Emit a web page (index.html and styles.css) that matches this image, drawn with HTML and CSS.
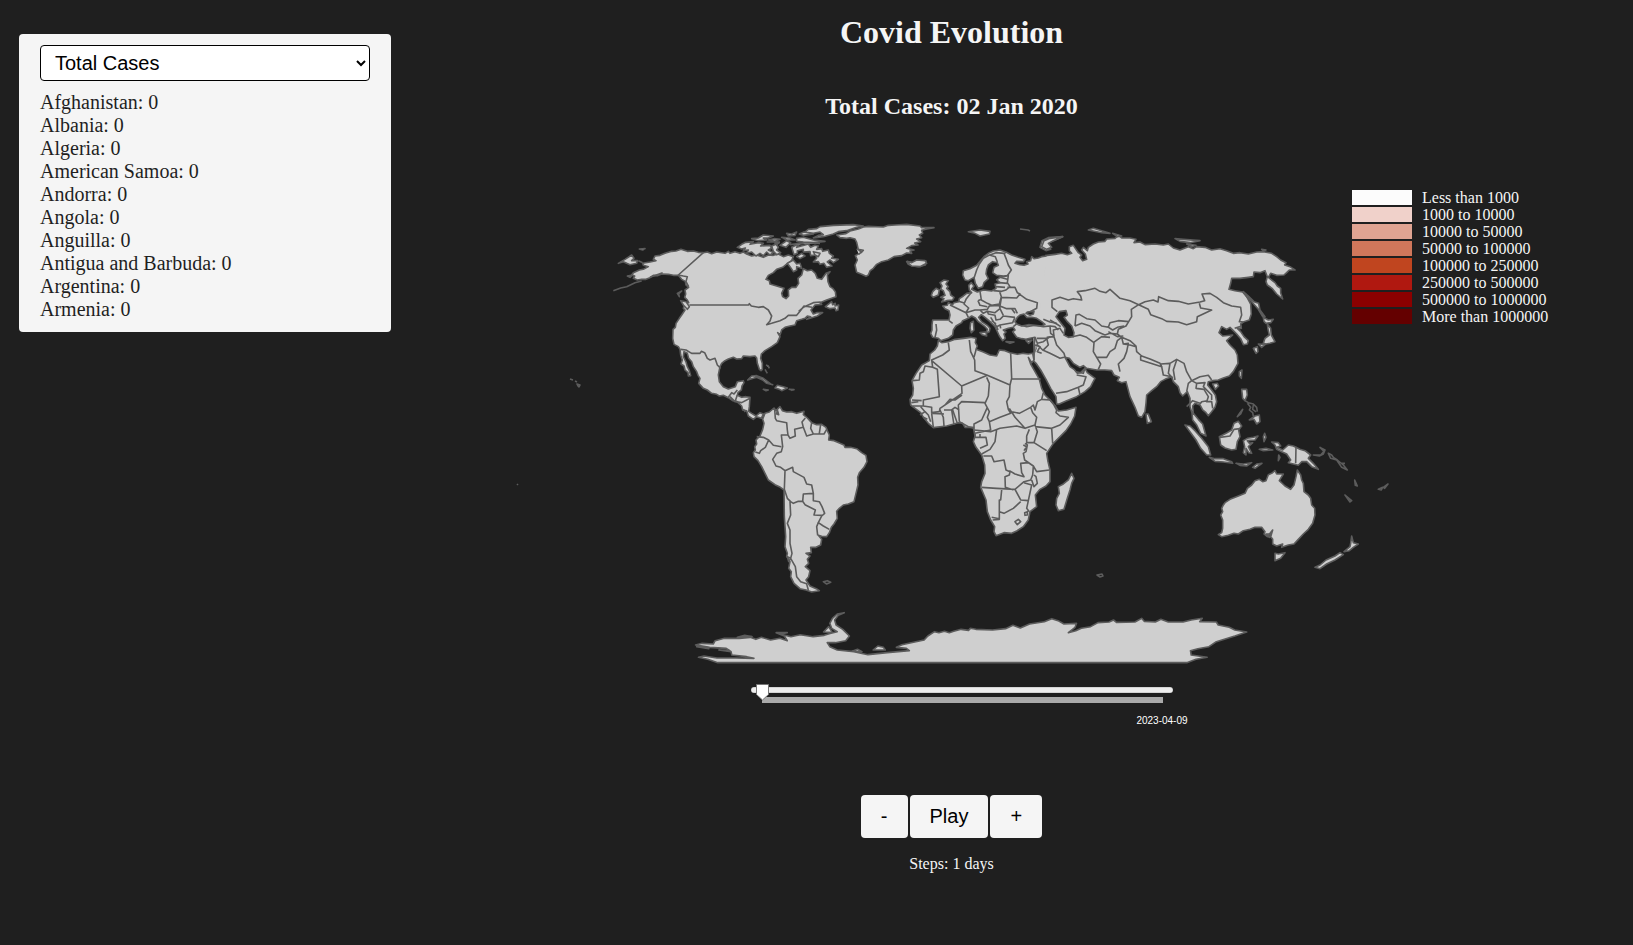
FILE: index.html
```html
<!DOCTYPE html>
<html lang="en">
<head>
<meta charset="utf-8">
<title>Covid Evolution</title>
<link rel="stylesheet" href="styles.css">
</head>
<body>
<aside class="side">
  <div class="panel">
    <select class="metric"><option>Total Cases</option><option>Total Deaths</option></select>
    <ul class="countries">
      <li>Afghanistan: 0</li><li>Albania: 0</li><li>Algeria: 0</li><li>American Samoa: 0</li><li>Andorra: 0</li><li>Angola: 0</li><li>Anguilla: 0</li><li>Antigua and Barbuda: 0</li><li>Argentina: 0</li><li>Armenia: 0</li>
    </ul>
  </div>
</aside>
<main class="main">
  <h1 class="title">Covid Evolution</h1>
  <h2 class="subtitle">Total Cases: 02 Jan 2020</h2>
  <svg class="map" viewBox="391 140 1121 535" width="1121" height="535">
    <!-- North America -->
    <g transform="translate(600 210) scale(.33333)">
      <path class="land" d="M310,128L295,127 280,123 262,124 250,120 243,118 228,123 215,124 195,130 180,136 165,138 160,148 168,152 150,156 128,160 130,166 145,170 130,178 118,180 100,188 95,195 104,198 100,205 112,210 125,208 138,208 150,203 160,196 172,197 185,192 205,193 220,196 235,196 245,208 256,214 258,225 266,232 255,240 257,252 254,262 262,270 266,278 255,280 250,295 255,300 245,315 238,325 228,340 226,352 219,358 218,385 222,403 235,410 240,418 242,435 247,450 243,462 252,468 255,480 264,488 265,498 272,497 268,482 262,470 258,456 250,440 252,425 262,430 266,445 275,455 280,470 290,485 294,496 300,505 296,520 310,535 322,540 335,550 350,553 358,558 370,556 385,563 398,572 410,574 425,588 428,600 440,602 445,618 460,628 470,620 484,625 490,612 480,608 468,618 455,610 446,604 448,590 450,562 438,560 425,562 412,556 414,548 424,540 426,528 432,518 430,512 412,515 406,530 385,537 370,530 358,515 355,495 360,470 365,460 375,452 385,447 400,442 410,447 425,446 430,438 450,440 465,438 470,444 472,460 478,478 483,482 487,478 487,460 482,445 484,432 495,422 515,410 532,398 540,380 533,368 540,375 545,360 555,352 570,348 585,345 590,332 605,328 615,325 622,318 632,320 620,328 640,322 652,318 668,308 650,308 640,312 633,300 645,285 665,283 660,278 680,270 708,260 706,245 698,235 690,230 684,215 682,195 690,185 678,190 665,208 652,205 646,190 635,180 622,182 610,176 605,195 594,205 596,220 588,232 575,232 565,240 566,258 558,266 548,260 545,250 552,235 530,228 510,222 508,212 498,208 505,196 520,188 530,178 548,172 560,162 575,152 580,140 565,135 550,140 535,132 520,136 505,135 490,142 470,135 455,138 440,132 430,126 420,130 405,125 390,130 385,124 375,130 350,126 335,131 322,126Z"/>
      <path class="line" d="M125,213L105,218 80,230 62,234 40,242M150,202L188,188M128,158L115,152M310,128L235,195 250,198 262,200 258,215 266,230M268,285H446L448,281 454,288 475,292 490,290 505,300 515,318 510,333 500,344 515,340 540,332 555,325 565,316 590,316 600,304 612,288 636,292M596,304L610,292 640,278 662,276M242,418L258,420 275,430 300,430 304,424 314,428 322,445 330,450 345,445 352,465 362,475M385,562L395,548 402,552 412,540M390,560L405,575 412,555M405,575L425,578 450,565M430,598L436,606"/>
      <path class="land" d="M55,160L75,148 95,135 102,145 95,152 112,152 110,160 90,164 80,160 70,155ZM118,117L135,116 128,120ZM82,198L98,195 90,202ZM232,250L245,243 236,252 238,260ZM242,272L258,275 268,290 262,298 250,285ZM676,290L695,275 698,284 706,280 705,288 716,285 714,300 708,302 705,294 690,296ZM443,510L455,498 470,497 490,505 512,522 518,524 500,520 488,510 470,502ZM525,534L532,526 550,530 562,534 545,542 538,538ZM490,538L505,540 498,542ZM568,538L582,539 575,541ZM498,465L505,468 508,475M495,478L502,490"/>
      <path class="land" d="M412,112L425,103 437,97 460,95 450,103 475,98 490,100 482,108 510,106 515,115 505,120 520,128 510,135 500,126 490,137 480,130 468,138 455,126 440,130 445,120 430,122 436,114 425,117ZM515,108L528,103 535,112 530,120 542,128 530,134 520,124ZM575,112L600,100 590,112 612,106 625,102 632,112 645,106 655,108 650,118 665,116 668,124 685,120 688,130 700,138 695,145 715,148 700,158 690,150 682,156 696,168 680,172 672,160 660,163 655,155 640,156 650,145 648,135 632,137 630,125 610,126 610,118 592,122 592,130 582,134ZM590,140L605,130 615,138 600,146ZM562,160L580,150 590,162 600,160 605,175 590,170 590,180 580,185 570,170Z"/>
      <path class="land" d="M455,86L475,84 490,75 520,78 505,84 490,84 500,90 475,92ZM505,90L522,86 540,88 525,94ZM540,106L560,92 572,98 558,112ZM525,100L538,98 530,104ZM560,70L575,72 590,66 585,76 565,78ZM545,82L570,84 585,90 560,90ZM598,72L612,66 630,70 640,72 610,76ZM615,66L625,58 650,56 660,50 700,46 760,44 790,48 770,52 740,62 715,65 700,72 670,80 640,84 655,76 670,74 660,66 640,70ZM590,85L610,82 640,90 675,94 640,98 610,96 590,94ZM500,96L540,96M570,104L620,98 660,100M640,125L660,130 655,140 645,135Z"/>
    </g>
    <!-- Greenland, Iceland -->
    <g transform="translate(740 215) scale(.33333)">
      <path class="land" d="M290,60L318,56 330,48 355,42 370,36 385,34 430,36 445,31 465,30 500,28 540,33 545,38 582,38 560,42 545,46 548,55 538,60 545,68 530,72 542,80 524,84 534,90 515,92 500,100 522,105 510,108 515,115 500,114 485,122 462,125 445,135 425,140 410,148 400,160 390,168 385,180 378,184 365,178 350,172 345,150 352,135 346,122 365,112 355,104 350,82 345,72 330,68 320,70 300,68ZM350,102L370,106 356,118M500,140L515,142 508,148 518,146 530,137 545,140 558,138 556,150 535,155 515,152 505,148Z"/>
    </g>
    <!-- South America -->
    <g transform="translate(730 390) scale(.33333)">
      <path class="land" d="M98,88L105,70 118,66 132,54 138,62 150,50 157,62 170,66 185,65 200,70 222,64 220,74 232,84 245,98 260,104 275,103 288,112 292,122 298,135 296,150 312,152 330,160 342,165 345,172 362,172 380,176 395,188 408,196 411,215 402,232 388,248 383,262 384,285 378,310 372,335 355,342 340,345 328,355 320,364 322,385 312,402 304,412 298,428 290,440 275,439 265,436 275,448 272,465 258,472 242,472 244,488 228,490 240,498 232,508 236,520 226,530 240,542 236,560 228,570 240,588 262,598 268,602 245,606 228,600 210,596 192,580 182,560 184,545 176,535 180,515 170,500 172,490 165,470 167,440 163,380 162,300 148,290 135,284 115,270 105,250 95,230 84,212 72,200 70,188 76,180 74,170 80,162 78,150 90,138 98,118 102,100Z"/>
      <path class="line" d="M134,58L136,85 140,92 170,98 172,120 174,135 154,135 158,170 154,185 140,190 128,208 138,228 152,232 165,242 188,232 190,245 222,262 230,282 245,285 250,310 250,332 268,335 276,350 284,370 275,378 265,398 280,408 298,418M80,140L100,142 116,150 106,172 92,182 88,190 76,186M116,150L130,166 154,170M174,135L180,145 196,138 194,118 220,112 216,96 226,84M220,112L230,138 250,132 242,115 245,98M250,132L282,132 290,118M268,130L272,103M165,242L163,298 172,325 182,335 190,340 205,334 218,334 220,312 250,310M218,334L225,344 256,360 252,375 276,376M180,335L182,375 172,400 180,420 180,460 186,490 182,505 196,530 200,560 212,575 232,582M265,398L260,410 263,436M230,582L235,600M142,60L146,74 140,72ZM172,500L182,505 176,515ZM280,575L292,572 302,577 290,582Z"/>
    </g>
    <!-- Asia -->
    <g transform="translate(1030 220) scale(.33333)">
      <path class="land-fill" d="M35,114L60,110 50,380 12,400 10,355Z"/>
      <path class="land" d="M45,107L75,103 95,100 112,104 125,100 118,92 118,80 130,76 138,88 145,98 155,105 150,112 158,122 170,118 166,102 155,90 160,82 172,92 175,82 190,72 205,66 225,64 230,57 255,55 265,46 275,54 300,54 318,58 312,68 330,66 345,74 375,72 400,75 415,72 430,84 450,90 475,80 490,86 500,80 525,82 545,90 570,86 590,92 610,100 630,98 655,102 680,96 700,95 725,100 740,110 752,120 768,128 764,135 780,140 795,150 778,150 770,158 762,165 740,166 722,160 715,172 735,188 742,198 752,205 752,218 758,237 740,222 726,205 712,195 708,185 712,170 705,152 690,158 672,156 670,170 655,172 630,175 605,175 602,190 597,208 615,212 638,216 650,230 662,252 664,282 658,300 642,305 632,312 634,325 622,325 632,335 642,350 655,362 652,372 640,374 632,356 620,342 610,332 600,322 590,328 575,320 567,338 578,348 608,345 590,362 600,375 615,390 622,405 624,430 610,455 598,468 580,474 565,480 548,482 535,485 533,495 545,510 556,525 560,545 555,562 545,575 535,587 528,578 518,570 510,555 495,550 488,558 490,580 505,598 518,612 528,648 512,640 500,615 488,600 486,578 480,560 480,535 472,515 458,528 450,518 445,500 430,485 425,470 405,478 392,485 380,500 365,512 350,525 348,550 345,575 335,592 325,588 315,562 300,530 292,500 288,485 275,488 262,482 268,472 252,465 245,452 225,450 200,450 170,445 160,437 150,442 130,430 118,415 105,412 120,440 132,448 142,460 152,458 165,445 172,458 195,475 188,488 182,500 165,515 140,530 110,542 88,552 80,552 78,530 62,505 48,478 32,450 18,430 8,420 12,400 18,385 14,370 18,350"/>
      <path class="sea" d="M78,290L88,275 108,272 112,285 102,292 112,305 125,318 132,338 130,350 115,352 102,345 105,325 95,312Z"/>
      <path class="line" d="M82,275L66,262 66,240 90,232 115,240 130,236 155,240 152,228 142,215 165,212 195,205 210,214 228,218 240,208 270,235 300,242 326,254 345,245 370,240 384,246 386,230 415,242 445,244 475,252 510,246 524,242 516,222 540,220 560,232 580,248 605,258 632,262 635,285 628,305 640,306M326,254L355,268 362,284 395,296 410,304 445,306 470,314 500,305 502,290 545,270 512,264 508,250M326,254L304,268 305,290 296,305 288,318 265,328 262,342 275,352 300,362 318,378 320,395 335,408 362,418 390,430 395,440 332,420 332,408M392,432L420,430 440,418 462,430 470,455 485,482 510,470 535,466 545,480M395,440L400,465 425,470M420,430L415,460 428,475M440,420L430,450 435,480M485,482L475,490 470,515M485,482L500,490 498,505 522,508 535,530 530,545 545,545 548,565M500,490L525,488 520,500 545,525 545,540M510,552L515,545 532,542M135,318L138,285 148,283 170,296 195,300 215,318 235,322 240,308 265,302 296,305M135,318L155,310 180,318 195,332 225,345 240,340 262,342M232,320L248,330 262,322 282,318M235,335L262,350 280,348M128,350L150,345 170,352 192,368 190,395 200,412 230,412 240,395 255,385 262,362 275,352M190,368L215,350 240,352M200,412L212,432 205,448M275,352L280,372 295,370 290,395 282,415 265,432 270,455M280,372L300,375 318,380M72,350L80,375 102,400 106,414M102,412L90,415 60,400 38,390 20,372M38,392L55,375 50,355 20,355M50,352L72,350 70,330 90,325 100,340M60,300L80,312 92,320M78,520L110,515 145,502 160,495 168,470 140,465M145,502L150,525M614,325L635,318M138,455L160,460 165,445"/>
      <path class="land" d="M175,30L190,25 215,32 240,40 215,38ZM248,40L275,48 262,50ZM435,56L460,58 510,62 480,68 450,64ZM470,72L498,76 485,80ZM695,88L708,90 700,92ZM30,82L36,62 55,53 98,50 70,62 50,72 62,88 48,92ZM640,215L655,228 672,245 686,250 690,270 705,290 698,290 685,268 665,245 650,230ZM700,292L715,300 730,298 722,308 708,310 702,304ZM712,312L722,325 724,345 735,365 720,370 708,372 700,370 705,355 718,345 714,328ZM670,385L682,380 684,395 678,400ZM685,372L705,374 695,382ZM628,455L636,450 634,475 628,468ZM548,492L562,490 566,498 556,508ZM348,582L355,582 364,605 352,610 350,598Z"/>
    </g>
    <!-- Europe and western Russia -->
    <g transform="translate(900 230) scale(.33333)">
      <path class="land" d="M440,78L425,80 415,84 402,86 395,80 392,92 380,95 384,102 372,106 360,104 345,100 350,94 370,95 375,88 355,82 335,75 318,66 300,60 280,63 265,70 252,80 240,94 230,106 210,116 190,122 188,135 195,150 205,152 222,142 226,160 235,175 248,170 252,158 265,146 258,132 260,118 265,105 278,95 292,98 295,106 282,112 278,128 290,136 310,138 325,137 300,142 290,150 300,158 285,162 288,175 275,183 250,180 232,186 215,178 222,168 214,158 206,166 208,180 215,188 200,190 190,198 178,206 176,215 162,218 158,224 145,218 142,226 128,228 135,236 147,242 150,255 147,270 120,270 98,270 96,285 96,300 92,310 98,322 115,325 122,332 145,325 158,315 160,300 168,288 185,278 188,272 205,265 215,258 226,264 235,275 255,290 262,298 258,310 268,305 270,295 262,286 245,275 236,262 244,254 255,262 270,275 285,290 292,305 298,318 308,332 316,325 312,312 318,306 310,300 325,295 340,292 345,300 338,305 350,322 365,326 378,328 390,325 405,322 403,340 402,390"/>
      <path class="line" d="M222,145L230,120 238,102 250,85 268,75 286,80 292,96M270,75L288,68 312,70 318,85 325,105 334,120 322,137M318,66L312,72M325,137L322,158 330,170 318,180 305,184 280,182M300,142L322,148M298,158L322,160M288,170L315,172M322,172L345,172 352,188 360,192 350,204 305,202M240,184L244,210 262,220 275,226 298,222 304,200 298,182M304,204L300,228 320,236 345,236 352,250M352,188L380,208 412,218 410,235 385,248M215,186L198,208 192,222 206,234 198,248 150,225M176,214L195,220M198,248L225,240 240,240 262,238 268,228 298,226M198,248L205,262M234,212L240,226 262,230M234,212L244,208M240,240L250,250 262,244 285,248 300,236 298,226M262,244L265,252 285,256 288,270 300,268 310,258 345,262M300,236L310,256M272,262L290,290 300,285 338,278 345,262M290,290L294,300M300,284L302,295M275,272L288,282M108,282L110,300 105,322M147,272L158,280M335,236L345,250M340,290L350,282 380,290 405,286 430,290 450,288 452,310 462,318M430,268L450,276 470,280M450,288L465,290 475,300M405,322L412,340 430,335 450,320M405,345L420,350 412,365 425,370"/>
      <path class="sea" d="M345,275L352,262 360,255 372,252 380,262 395,262 410,265 425,275 435,283 425,288 405,286 385,284 365,288 350,282Z"/>
      <path class="sea" d="M382,246L402,244 400,252 390,256 378,250Z"/>
      <path class="land" d="M22,94L35,98 50,90 75,92 80,100 60,110 35,108 28,102ZM120,158L132,150 145,152 138,162 145,170 140,175 150,185 152,195 162,202 158,210 140,212 125,216 132,206 122,202 135,196 130,182 122,178 126,168ZM98,185L108,175 118,180 115,195 100,202 94,196ZM205,5L225,2 240,0 270,4 268,12 240,18 225,10ZM425,50L432,32 450,25 488,20 460,32 445,40 455,52 440,58ZM212,278L220,274 222,300 214,308 210,295ZM240,308L258,306 260,318 246,314ZM318,335L342,336 330,340ZM378,332L396,330 386,340Z"/>
    </g>
    <!-- Africa -->
    <g transform="translate(900 330) scale(.33333)">
      <path class="land" d="M115,32L125,38 145,35 165,28 190,25 212,22 228,25 226,38 232,48 228,58 250,66 270,75 290,78 298,60 315,62 330,68 352,73 370,70 385,72 398,70 402,90 395,98 385,82 392,102 405,125 418,148 425,175 435,195 452,212 465,228 475,243 500,240 528,232 524,258 512,282 498,302 478,322 460,340 448,358 440,370 444,395 450,420 450,455 438,468 420,478 406,495 410,530 390,545 385,570 370,590 350,603 335,610 312,608 288,617 282,605 284,590 272,570 262,545 258,510 242,472 245,455 255,430 254,405 245,375 228,352 220,335 225,318 220,292 195,292 188,280 175,278 140,288 100,293 85,280 70,262 62,248 45,235 32,225 30,208 38,195 40,175 36,152 48,130 65,105 88,92 90,72 104,60 112,48Z"/>
      <path class="line" d="M145,38L148,60 128,75 95,90 98,112 75,108 70,125 60,130 58,150 38,152M95,92L185,168 186,190 160,208 120,235 118,245 95,248 95,232 70,228 70,210 118,200 112,118 98,112M185,168L262,136 225,122 224,90 212,65 208,30M228,60L222,82M262,136L330,165 335,145 332,70M335,147H422M330,165L328,200 320,215 325,238 332,250 300,262 268,275 262,262 268,245 255,220 265,198 268,160 260,142M255,218L185,215 175,225 178,275M186,195L165,210 150,208 135,225M120,240L130,262 132,288M132,240H155L162,285M155,240L165,232 178,240M158,240L172,280M95,250L100,292M98,250L132,252M70,228L38,228M62,230L75,245 60,255M75,245L85,255 92,275M36,210L65,212M34,218L55,215M70,262L82,268M178,275L205,290 222,295 222,282 245,270 262,232M268,275L272,300 225,310M222,300L272,305 300,295 350,288 375,295 345,262 335,245 358,250 392,232 398,248 410,262 405,285 375,295M328,235L345,262M392,232L400,225 405,240 412,215 425,208 430,188M425,208L450,210 468,230M462,225L470,240 468,248 480,258 505,262 480,285 455,295 405,290M455,295L458,340M405,285L412,305 402,338 380,338 380,318 388,298M402,338L440,362M375,340L382,345 378,365 370,370 374,390 400,408 410,425 448,420M225,312V322H240V312M238,322H258L262,345 240,355M290,298L285,335 270,358 245,372M250,378H275L282,395 312,390 318,420 330,425 328,435 315,440 316,472 340,480M245,472L290,475 345,478M328,422L345,432 372,440 365,428 362,400 385,398 400,408M400,410L398,435 392,450 372,455 345,478 362,510 385,512 395,465 372,458M395,450L402,470 412,460 408,440 402,435M305,480L302,510H298V568L278,570M298,545L312,550 340,535 362,515M385,512L380,535 388,545M275,562L298,566M345,575L355,568 362,575 352,584ZM374,548L382,545 382,555 375,556ZM370,345L380,350 372,362"/>
      <path class="land" d="M515,430L522,445 515,460 510,480 502,505 492,538 475,542 468,525 470,505 478,490 475,470 490,462 505,450Z"/>
    </g>
    <!-- South-east Asia and Oceania -->
    <g transform="translate(1160 380) scale(.33333)">
      <path class="land" d="M178,462L185,458 188,445 188,420 182,405 188,395 185,385 190,375 195,368 210,358 235,348 255,340 262,325 275,315 285,302 298,298 308,305 318,302 325,284 335,280 345,272 350,282 370,282 358,302 375,318 392,328 402,315 408,290 412,270 422,285 425,300 430,310 432,335 445,345 452,355 455,375 464,385 465,405 458,430 445,448 430,462 415,478 402,492 385,495 365,502 368,492 350,498 338,492 338,478 332,470 338,450 322,470 312,462 315,455 305,442 285,442 270,448 250,452 235,462 222,460 205,466 185,470 175,464Z"/>
      <path class="line" d="M318,462L332,462 328,472Z"/>
      <path class="land" d="M345,520L355,522 375,518 362,535 345,542ZM465,562L480,555 498,540 525,528 540,518 550,524 525,540 500,552 480,566ZM552,515L570,500 572,490 575,468 580,488 595,492 580,502 568,512ZM75,135L90,138 105,152 125,175 145,200 152,225 140,225 122,205 108,180 92,158ZM148,232L165,236 190,236 215,245 218,250 190,246 165,244ZM228,250L250,252 275,248 260,258 240,256ZM278,262L290,252 306,250 285,265ZM178,170L198,160 215,150 222,130 235,124 245,138 236,150 240,170 232,185 228,208 215,210 195,204 182,195ZM250,182L262,175 280,172 294,168 285,180 262,182 268,190 278,188 265,200 275,220 266,218 258,205 258,225 250,218 254,200ZM314,160L318,172 312,185 310,170ZM298,208L318,205 338,210 310,212ZM335,186L355,188 362,198 350,202 368,210 385,195 400,198 420,208 435,212 452,225 445,235 460,250 475,268 455,260 440,245 425,245 415,256 400,252 385,248 392,240 380,222 365,215 350,208 345,195ZM356,225L360,232 355,242ZM245,28L260,28 262,45 255,62 248,55ZM268,120L285,108 298,105 300,125 290,132 282,118Z"/>
      <path class="line" d="M255,62L265,68 280,72 290,82 292,95M262,70L272,82 268,90 278,98 280,108M280,75L278,88 288,96M232,110L240,98 248,88 242,102ZM460,225L478,228 490,222 495,210 480,202 492,214 482,225ZM505,220L515,225 520,232 532,240 550,255 562,270 545,262 530,240 512,235ZM540,250L555,250M584,300L592,318 586,316ZM555,345L575,362 570,366ZM655,328L668,322 664,330ZM670,322L684,312 674,325Z"/>
      <path class="line" d="M180,172L210,168 222,148 240,146M408,200L407,250M80,80L98,62 120,70"/>
    </g>
    <!-- Antarctica -->
    <g transform="translate(680 600) scale(.3699 .33333)">
      <path class="land" d="M102,188L75,178 50,172 65,168 100,174 150,174 200,175 180,170 140,165 138,155 105,150 135,152 125,145 80,142 60,138 42,135 60,130 90,132 95,122 120,115 160,115 190,112 205,118 220,112 245,120 270,115 290,122 282,108 260,98 290,98 270,102 300,110 325,104 360,110 390,106 408,100 425,95 410,85 405,70 412,55 425,42 444,38 428,46 418,60 422,75 440,88 458,108 448,122 420,128 398,128 405,140 425,150 470,155 508,164 560,158 620,152 612,145 585,142 600,134 625,128 660,120 670,108 688,95 700,98 715,94 728,98 740,94 760,88 780,91 785,85 800,88 845,90 880,86 900,76 920,84 945,72 985,65 1005,56 1022,62 1038,72 1072,70 1068,82 1050,98 1070,92 1085,85 1110,80 1130,68 1160,66 1172,60 1180,67 1230,66 1248,55 1255,64 1285,66 1300,58 1320,66 1360,66 1382,60 1412,55 1405,65 1450,66 1455,75 1485,82 1500,90 1532,96 1500,108 1450,125 1430,140 1400,146 1380,152 1382,165 1425,172 1395,178 1370,188ZM388,96L402,80 412,98ZM522,150L535,138 550,142 555,150ZM465,154L480,148 492,155ZM45,140L78,146 60,140ZM155,112L175,106 195,110Z"/>
    </g>
    <path class="line" d="M517,484l1,1M570,379l3,1M575,381l2,1M577,384l3,1 -1,2 -1,-1zM1097,575l5,-1 1,2 -3,1zM1020,229l8,1 2,1"/>
    <!-- legend -->
    <g class="legend">
      <rect x="1352" y="190" width="60" height="15" fill="#fcfcfc"/><text x="1422" y="203">Less than 1000</text>
      <rect x="1352" y="207" width="60" height="15" fill="#f0d1ca"/><text x="1422" y="220">1000 to 10000</text>
      <rect x="1352" y="224" width="60" height="15" fill="#e0a492"/><text x="1422" y="237">10000 to 50000</text>
      <rect x="1352" y="241" width="60" height="15" fill="#d0775b"/><text x="1422" y="254">50000 to 100000</text>
      <rect x="1352" y="258" width="60" height="15" fill="#c0451f"/><text x="1422" y="271">100000 to 250000</text>
      <rect x="1352" y="275" width="60" height="15" fill="#b01810"/><text x="1422" y="288">250000 to 500000</text>
      <rect x="1352" y="292" width="60" height="15" fill="#8b0000"/><text x="1422" y="305">500000 to 1000000</text>
      <rect x="1352" y="309" width="60" height="15" fill="#640000"/><text x="1422" y="322">More than 1000000</text>
    </g>
  </svg>
  <svg class="slider" viewBox="741 675 421 65" width="421" height="65">
    <path d="M754,690H1170" stroke="#bbb" stroke-width="6" stroke-linecap="round"/>
    <path d="M754,690H1170" stroke="#eee" stroke-width="5" stroke-linecap="round"/>
    <path d="M762,700H1163" stroke="#aaa" stroke-width="6"/>
    <path d="M756.5,684.5v10l6,5.5l6,-5.5v-10z" fill="#fff" stroke="#777"/>
    <text x="1162" y="724" text-anchor="middle">2023-04-09</text>
  </svg>
  <div class="controls"><button class="btn">-</button><button class="btn">Play</button><button class="btn">+</button></div>
  <p class="steps">Steps: 1 days</p>
</main>
</body>
</html>
```
FILE: styles.css
```css
* { box-sizing: border-box; }
body { margin: 0; height: 945px; overflow: hidden; display: flex; background: #1f1f1f; color: #f5f5f5; font-family: "Liberation Serif", serif; font-size: 16px; }
.side { width: 391px; padding: 34px 0 0 19px; flex: none; }
.panel { height: 298px; padding: 11px 21px; background: #f5f5f5; border-radius: 4px; color: #1f1f1f; }
.metric { display: block; width: 330px; height: 36px; padding: 0 0 0 10px; border: 1px solid #000; border-radius: 4px; background: #fff; color: #000; font: 20px "Liberation Sans", sans-serif; }
.countries { list-style: none; margin: 10px 0 0; padding: 0; font-size: 20px; line-height: 23px; }
.main { width: 1121px; flex: none; display: flex; flex-direction: column; align-items: center; }
.title { margin: 14px 0 0; font-size: 32px; line-height: 37px; }
.subtitle { margin: 41px 0 0; font-size: 24px; line-height: 28px; }
.map { display: block; margin-top: 20px; overflow: visible; flex: none; }
.slider { display: block; overflow: visible; flex: none; align-self: flex-start; margin-left: 350px; }
.slider path { fill: none; }
.slider path[fill] { fill: #fff; }
.slider text { font: 10px "Liberation Sans", sans-serif; fill: #fff; }
.land, .line, .sea { stroke: #5c5c5c; stroke-width: 1.6px; stroke-linejoin: round; vector-effect: non-scaling-stroke; }
.land, .land-fill { fill: #cfcfcf; }
.line { fill: none; }
.sea { fill: #1f1f1f; }
.legend text { font: 16px "Liberation Serif", serif; fill: #f5f5f5; }
.controls { display: flex; gap: 2px; margin-top: 55px; }
.btn { height: 43px; padding: 10px 20px; border: 0; border-radius: 4px; background: #f5f5f5; color: #000; font: 20px "Liberation Sans", sans-serif; }
.steps { margin: 17px 0 0; line-height: 18px; }
```
